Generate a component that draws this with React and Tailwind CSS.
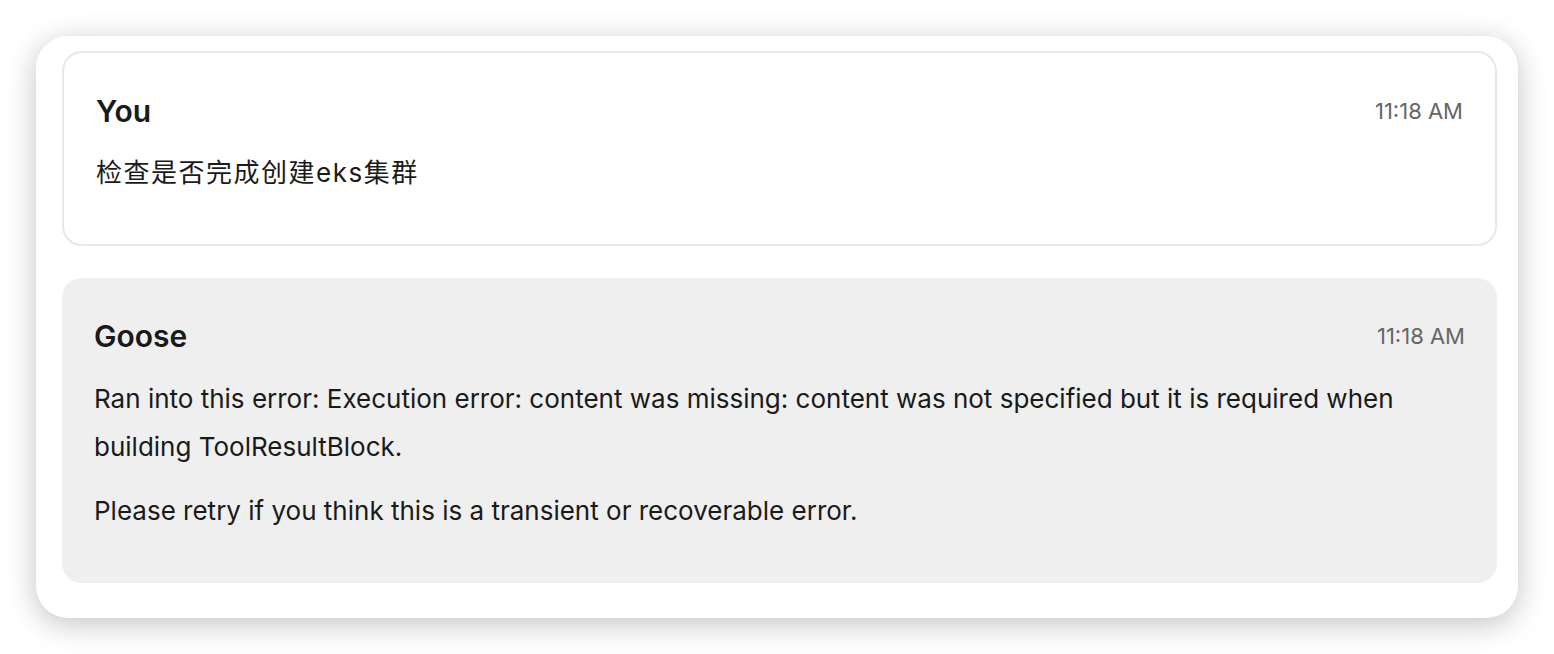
export default function App() {
  const font = { fontFamily: 'Inter, "Noto Sans CJK SC", sans-serif' };
  return (
    <div className="w-[1554px] h-[654px] bg-white pt-[36px] pl-[36px]" style={font}>
      <div className="w-[1482px] h-[582px] bg-white rounded-[32px] shadow-[0_6px_30px_rgba(0,0,0,0.24)] pt-[15px] pl-[26px] pr-[21px] flex flex-col gap-[32px]">
        <div className="rounded-[20px] border-2 border-[#e8e8e8] px-[32px] pt-[32px] pb-[32px] text-[#1a1a1a]">
          <div className="flex justify-between items-center h-[52px]">
            <span className="text-[30px] font-semibold">You</span>
            <span className="text-[22px] text-[#666]">11:18 AM</span>
          </div>
          <p className="mt-[12px] text-[26px] tracking-[1.5px] leading-[48px] mb-[15px]">检查是否完成创建eks集群</p>
        </div>
        <div className="rounded-[20px] bg-[#efefef] px-[32px] pt-[32px] pb-[32px] text-[#1a1a1a]">
          <div className="flex justify-between items-center h-[52px]">
            <span className="text-[30px] font-semibold">Goose</span>
            <span className="text-[22px] text-[#666]">11:18 AM</span>
          </div>
          <p className="mt-[13px] text-[26px] leading-[48px] mb-[16px]">
            Ran into this error: Execution error: content was missing: content was not specified but it is required when building ToolResultBlock.
          </p>
          <p className="text-[26px] leading-[48px] mb-[16px]">Please retry if you think this is a transient or recoverable error.</p>
        </div>
      </div>
    </div>
  );
}
